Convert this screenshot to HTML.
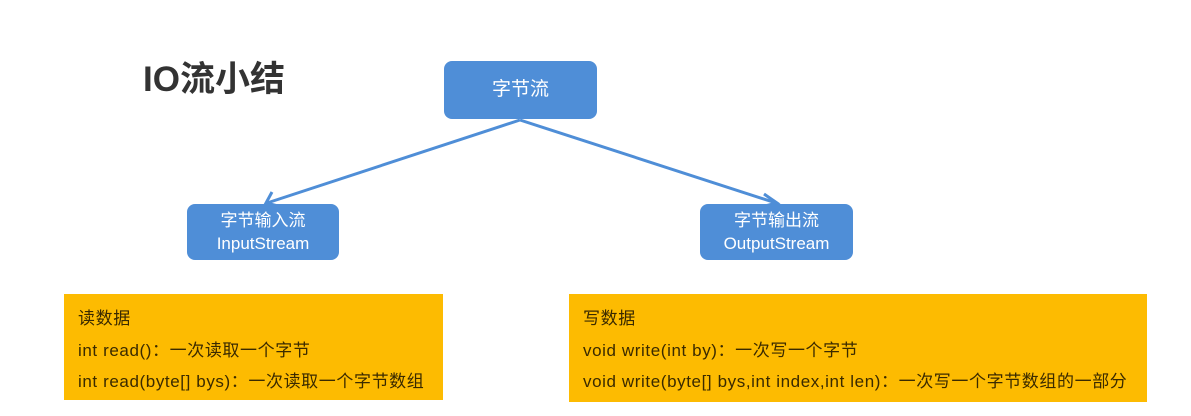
<!DOCTYPE html><html><head><meta charset="utf-8"><style>
body{margin:0;width:1191px;height:416px;background:#fff;position:relative;overflow:hidden;font-family:"Liberation Sans","Noto Sans CJK SC",sans-serif}
.t{position:absolute;left:143px;top:51px;font-size:35px;font-weight:bold;color:#333}
.b{position:absolute;background:#4f8ed7;border-radius:8px;color:#fff;text-align:center;font-size:17px;line-height:23px;box-sizing:border-box}
.y{position:absolute;background:#fdbb01;color:#3a2a00;font-size:17px;letter-spacing:0.6px;box-sizing:border-box;padding:9px 0 0 14px;line-height:31.5px}
</style></head><body>
<div class="t">IO流小结</div>
<svg style="position:absolute;left:0;top:0" width="1191" height="416"><g stroke="#4f8ed7" stroke-width="3" fill="none"><line x1="520" y1="120" x2="267" y2="203"/><line x1="520" y1="120" x2="776" y2="203"/><polyline points="272,192 266,203 278,206"/><polyline points="764,194 777,203 765,206"/></g></svg>
<div class="b" style="left:444px;top:61px;width:153px;height:58px;line-height:58px;font-size:19px">字节流</div>
<div class="b" style="left:187px;top:204px;width:152px;height:56px;padding-top:5px">字节输入流<br>InputStream</div>
<div class="b" style="left:700px;top:204px;width:153px;height:56px;padding-top:5px">字节输出流<br>OutputStream</div>
<div class="y" style="left:64px;top:294px;width:379px;height:106px">读数据<br>int read()：一次读取一个字节<br>int read(byte[] bys)：一次读取一个字节数组</div>
<div class="y" style="left:569px;top:294px;width:578px;height:108px">写数据<br>void write(int by)：一次写一个字节<br>void write(byte[] bys,int index,int len)：一次写一个字节数组的一部分</div>
</body></html>
